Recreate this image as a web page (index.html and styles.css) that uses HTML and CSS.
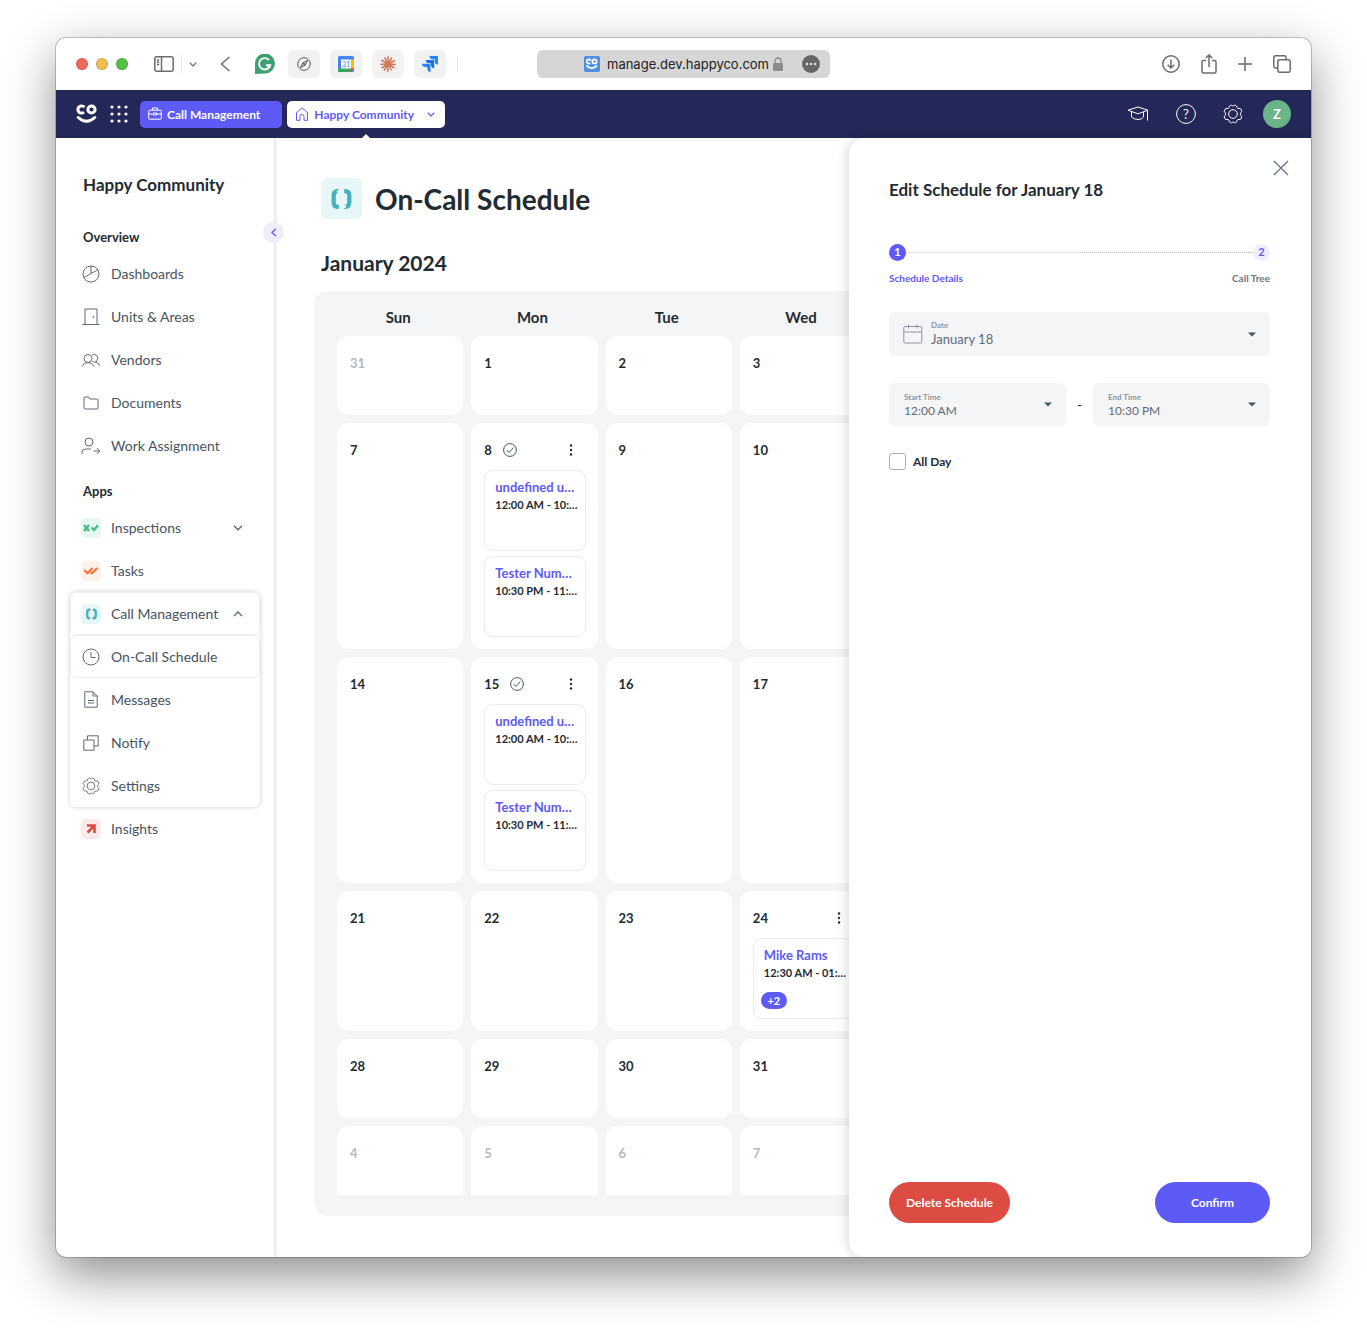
FILE: index.html
```html
<!DOCTYPE html>
<html lang="en">
<head>
  <meta charset="UTF-8">
  <meta name="viewport" content="width=device-width, initial-scale=1.0">
  <title>On-Call Schedule</title>
  <link rel="stylesheet" href="styles.css">
</head>
<body>
  <!-- shared icons -->
  <svg class="sprite" aria-hidden="true">
    <symbol id="i-gear" viewBox="0 0 20 20">
      <path d="M7.6 1.3 C8.3 0.6 8.9 1.9 10 1.9 S11.700 0.600 12.400 1.300 L13.600 2 C14.100 3 13.700 3.800 14.500 4.300 S16.700 4.100 17.500 4.700 L18.800 7 C18.900 8 17.300 8.700 17.300 10 S18.900 12 18.800 13 L17.500 15.300 C16.700 15.900 15.300 15.200 14.500 15.700 S14.100 17 13.600 18 L12.400 18.700 C11.700 19.400 11.100 18.100 10 18.100 S8.300 19.400 7.600 18.700 L6.400 18 C5.900 17 6.300 16.200 5.500 15.700 S3.300 15.900 2.500 15.300 L1.200 13 C1.100 12 2.700 11.300 2.700 10 S1.100 8 1.200 7 L2.500 4.700 C3.300 4.100 4.700 4.800 5.500 4.300 S5.900 3 6.400 2 Z"/>
      <circle cx="10" cy="10" r="4.300"/>
    </symbol>
    <symbol id="i-call" viewBox="0 0 24 24">
      <path d="M9 3.500 H8 Q3.500 3.500 3.500 8 V16 Q3.500 20.500 8 20.500 H9" fill="none" stroke="#46b1bb" stroke-width="4.600"/>
      <path d="M15 3.500 H16 Q20.500 3.500 20.500 8 V16 Q20.500 20.500 16 20.500 H15" fill="none" stroke="#46b1bb" stroke-width="4.600"/>
      <circle cx="8.500" cy="3.800" r="1.700" fill="#e7f6f7"/>
      <circle cx="15.500" cy="20.200" r="1.700" fill="#e7f6f7"/>
    </symbol>
    <symbol id="i-check" viewBox="0 0 14 14">
      <circle cx="7" cy="7" r="6.400"/>
      <path d="M3.800 7.200 L6.200 9.400 L10.300 4.700"/>
    </symbol>
    <symbol id="i-more" viewBox="0 0 4 12">
      <circle cx="2" cy="1.500" r="1.200"/><circle cx="2" cy="6" r="1.200"/><circle cx="2" cy="10.500" r="1.200"/>
    </symbol>
    <symbol id="i-down" viewBox="0 0 10 6"><path d="M1 .8 L5 4.800 L9 .8"/></symbol>
    <symbol id="i-up" viewBox="0 0 10 6"><path d="M1 5 L5 1 L9 5"/></symbol>
    <symbol id="i-caret" viewBox="0 0 8 5"><path d="M0 .5 H8 L4 4.500 Z"/></symbol>
    <symbol id="i-logo" viewBox="0 0 22 20">
      <circle cx="5.500" cy="5.500" r="3.600" fill="none" stroke="#fff" stroke-width="3" stroke-dasharray="16.800 6" transform="rotate(48 5.500 5.500)"/>
      <circle cx="15.500" cy="5.500" r="3.600" fill="none" stroke="#fff" stroke-width="3"/>
      <path d="M2.200 13.500 Q10.500 21 18.800 13.500" fill="none" stroke="#fff" stroke-width="3" stroke-linecap="round"/>
    </symbol>
  </svg>

  <div class="window">
    <header class="toolbar">
      <div class="toolbar-left">
        <div class="lights">
          <span class="light red"></span>
          <span class="light yellow"></span>
          <span class="light green"></span>
        </div>
        <button class="tool sidebar-tool" aria-label="Sidebar">
          <svg width="20" height="16" viewBox="0 0 20 16"><rect x=".8" y=".8" width="18.400" height="14.400" rx="2"/><path d="M7.500 1 V15 M2.800 4 H5.200 M2.800 6.300 H5.200 M2.800 8.600 H5.200"/></svg>
        </button>
        <button class="tool tabs-tool" aria-label="Tab groups"><svg width="8" height="5"><use href="#i-down"/></svg></button>
        <button class="tool back-tool" aria-label="Back">
          <svg width="11" height="16" viewBox="0 0 11 16"><path d="M9.500 1 L1.500 8 L9.500 15"/></svg>
        </button>
        <button class="tool" aria-label="Grammarly">
          <svg width="20" height="20" viewBox="0 0 20 20"><path d="M0 20 V10 A10 10 0 1 1 10 19.500 Z" fill="#3d9f74" stroke="none"/><path d="M14 6 A5.700 5.700 0 1 0 15.300 11.200 H11 M13.400 11.200 V14.500" stroke="#fff" stroke-width="1.900"/></svg>
        </button>
        <div class="extensions">
          <button class="ext" aria-label="Compass">
            <svg width="14" height="14" viewBox="0 0 14 14"><circle cx="7" cy="7" r="6.300" fill="none" stroke="#555"/><path d="M10.500 3.500 L8.200 8.200 L3.500 10.500 L5.800 5.800 Z" fill="none" stroke="#555"/><circle cx="7" cy="7" r="1" fill="#555"/></svg>
          </button>
          <button class="ext" aria-label="Calendar">
            <svg width="16" height="16" viewBox="0 0 16 16"><rect width="16" height="16" rx="1.500" fill="#4285f4"/><path d="M12.500 3.500 H16 V12.500 H12.500 Z" fill="#fbbc04"/><path d="M0 12.500 H12.500 V16 H1.500 Q0 16 0 14.500 Z" fill="#34a853"/><path d="M12.500 12.500 H16 L12.500 16 Z" fill="#ea4335"/><rect x="3" y="3.500" width="10" height="9" fill="#fff"/><text x="8" y="10.700" text-anchor="middle" font-size="7" fill="#4285f4">31</text></svg>
          </button>
          <button class="ext" aria-label="Claude">
            <svg width="16" height="16" viewBox="0 0 16 16"><path d="M8 8 V.3 M8 8 L12 1.500 M8 8 L15 4.500 M8 8 L15.700 8.500 M8 8 L14.500 12 M8 8 L11.500 14.500 M8 8 L7.800 15.700 M8 8 L4 14.500 M8 8 L1.500 12 M8 8 L.3 8.300 M8 8 L1.200 4 M8 8 L4.500 1.300" stroke="#d0785a" stroke-width="1.500"/></svg>
          </button>
          <button class="ext" aria-label="Jira">
            <svg width="16" height="16" viewBox="0 0 16 16"><path d="M7.500 0 H16 V8.500 Q12.800 8.500 12.800 5 V3.300 H11 Q7.500 3.300 7.500 0 Z" fill="#2684ff"/><path d="M3.800 3.900 H12.200 V12.200 Q9 12.200 9 8.800 V7.200 H7.300 Q3.800 7.200 3.800 3.900 Z" fill="#1d6fe8"/><path d="M0 7.700 H8.500 V16 Q5.300 16 5.300 12.600 V11 H3.500 Q0 11 0 7.700 Z" fill="#2684ff"/></svg>
          </button>
        </div>
        <span class="divider"></span>
      </div>

      <div class="address">
        <svg width="16" height="16" viewBox="-3 -3 28 28"><rect x="-3" y="-3" width="28" height="28" rx="3" fill="#4f8fe3"/><use href="#i-logo" width="22" height="20" y="1"/></svg>
        <input type="text" class="url" aria-label="Address" value="manage.dev.happyco.com">
        <svg class="lock" width="10" height="14" viewBox="0 0 10 14"><rect y="6" width="10" height="8" rx="1.300" fill="#8b8b8b"/><path d="M2 6.500 V4 A3 3 0 0 1 8 4 V6.500" fill="none" stroke="#8b8b8b" stroke-width="1.300"/></svg>
        <button class="page-menu" aria-label="Page menu">
          <svg width="18" height="18" viewBox="0 0 18 18"><circle cx="9" cy="9" r="9" fill="#666"/><circle cx="5" cy="9" r="1.300" fill="#ddd"/><circle cx="9" cy="9" r="1.300" fill="#ddd"/><circle cx="13" cy="9" r="1.300" fill="#ddd"/></svg>
        </button>
      </div>

      <div class="toolbar-right">
        <button class="tool" aria-label="Downloads"><svg width="18" height="18" viewBox="0 0 18 18"><circle cx="9" cy="9" r="8.200"/><path d="M9 4.500 V13 M5.700 9.800 L9 13 L12.300 9.800"/></svg></button>
        <button class="tool" aria-label="Share"><svg width="16" height="20" viewBox="0 0 16 20"><path d="M5 6.500 H2.500 Q1 6.500 1 8 V17.500 Q1 19 2.500 19 H13.500 Q15 19 15 17.500 V8 Q15 6.500 13.500 6.500 H11 M8 13 V1 M4.800 4 L8 .9 L11.200 4"/></svg></button>
        <button class="tool" aria-label="New tab"><svg width="14" height="14" viewBox="0 0 14 14"><path d="M7 0 V14 M0 7 H14"/></svg></button>
        <button class="tool" aria-label="Tab overview"><svg width="18" height="18" viewBox="0 0 18 18"><path d="M4.500 13 H2.500 Q.8 13 .8 11.300 V2.500 Q.8 .8 2.500 .8 H11.300 Q13 .8 13 2.500 V4.500"/><rect x="4.800" y="4.800" width="12.400" height="12.400" rx="1.700"/></svg></button>
      </div>
    </header>

    <nav class="navbar">
      <a href="#" class="logo" aria-label="HappyCo"><svg width="22" height="20"><use href="#i-logo"/></svg></a>
      <button class="apps-button" aria-label="Apps">
        <svg width="18" height="18" viewBox="0 0 18 18" fill="#fff"><circle cx="2" cy="2" r="1.600"/><circle cx="9" cy="2" r="1.600"/><circle cx="16" cy="2" r="1.600"/><circle cx="2" cy="9" r="1.600"/><circle cx="9" cy="9" r="1.600"/><circle cx="16" cy="9" r="1.600"/><circle cx="2" cy="16" r="1.600"/><circle cx="9" cy="16" r="1.600"/><circle cx="16" cy="16" r="1.600"/></svg>
      </button>
      <button class="nav-pill primary">
        <svg width="14" height="14" viewBox="0 0 14 14"><rect x=".7" y="3.200" width="12.600" height="9" rx="1"/><path d="M4.500 3 V1 H9.500 V3 M.7 7 H5.500 M8.500 7 H13.300 M5.500 6 H8.500 V8 H5.500 Z"/></svg>
        Call Management
      </button>
      <button class="nav-pill community">
        <svg width="14" height="14" viewBox="0 0 14 14"><path d="M.7 6.500 L7 .8 L13.300 6.500 M1.500 6 V13.300 H5 V9.500 Q5 7.500 7 7.500 T9 9.500 V13.300 H12.500 V6"/></svg>
        Happy Community
        <svg class="chevron" width="8" height="5"><use href="#i-down"/></svg>
      </button>
      <div class="nav-right">
        <button class="nav-icon" aria-label="Learning"><svg width="22" height="16" viewBox="0 0 22 16"><path d="M11 1 L21 4.200 L11 7.800 L1 4.200 Z M4.500 6 V11 Q7 13.500 11 13.500 T16.500 11 V6 M20.500 4.500 V14.500"/></svg></button>
        <button class="nav-icon" aria-label="Help"><svg width="20" height="20" viewBox="0 0 20 20"><circle cx="10" cy="10" r="9.400"/><text x="10" y="14.500" text-anchor="middle" font-size="13" fill="#fff" stroke="none">?</text></svg></button>
        <button class="nav-icon" aria-label="Settings"><svg width="20" height="20"><use href="#i-gear"/></svg></button>
        <button class="avatar">Z</button>
      </div>
    </nav>

    <div class="content">
      <aside class="sidebar">
        <h2>Happy Community</h2>
        <button class="collapse" aria-label="Collapse sidebar"><svg width="6" height="9" viewBox="0 0 6 9"><path d="M5 .8 L1 4.500 L5 8.200"/></svg></button>

        <h3>Overview</h3>
        <a href="#" class="item"><span class="icon"><svg width="18" height="18" viewBox="0 0 18 18"><circle cx="9" cy="9" r="8"/><path d="M9 1 V8.500 L2 12.500 M9 8.500 L15.800 5"/></svg></span>Dashboards</a>
        <a href="#" class="item"><span class="icon"><svg width="18" height="18" viewBox="0 0 18 18"><path d="M3 16.500 V1 H15 V16.500 M.5 16.500 H17.500"/><circle cx="11.500" cy="9" r=".6"/></svg></span>Units &amp; Areas</a>
        <a href="#" class="item"><span class="icon"><svg width="20" height="16" viewBox="0 0 20 16"><circle cx="7" cy="6.500" r="4"/><path d="M1 14.500 Q2.500 10.500 7 10.500 T13 14.500 M11 3 Q13.500 1.500 15.800 3.500 T15.500 9.500 Q13.500 10.700 11.500 9.500 M14.500 10.300 Q18 10.800 19 14"/></svg></span>Vendors</a>
        <a href="#" class="item"><span class="icon"><svg width="16" height="14" viewBox="0 0 16 14"><path d="M1 2 Q1 1 2 1 H5.500 L7 3 H14 Q15 3 15 4 V12 Q15 13 14 13 H2 Q1 13 1 12 Z"/></svg></span>Documents</a>
        <a href="#" class="item"><span class="icon"><svg width="20" height="18" viewBox="0 0 20 18"><circle cx="8" cy="5" r="4"/><path d="M1 17 V15 Q1 12 4.500 12 H10 M12.500 14 H18.500 M15.800 11 L18.800 14 L15.800 17"/></svg></span>Work Assignment</a>

        <h3 class="apps-heading">Apps</h3>
        <a href="#" class="item">
          <span class="icon tile green-tile"><svg width="16" height="8" viewBox="0 0 16 8"><path d="M1 1 L6 7 M6 1 L1 7 M8.500 3.500 L11 6 L15 1.300" stroke="#45bd8b" stroke-width="2.300"/></svg></span>Inspections
          <svg class="chevron" width="10" height="6"><use href="#i-down"/></svg>
        </a>
        <a href="#" class="item"><span class="icon tile orange-tile"><svg width="16" height="8" viewBox="0 0 16 8"><path d="M1.200 3 L4.300 6.200 L9.500 1 M7 4.500 L8.800 6.200 L14.500 1" stroke="#f3743c" stroke-width="2.200"/></svg></span>Tasks</a>

        <div class="submenu">
          <a href="#" class="item boxed">
            <span class="icon tile teal-tile"><svg width="13" height="12"><use href="#i-call"/></svg></span>Call Management
            <svg class="chevron" width="10" height="6"><use href="#i-up"/></svg>
          </a>
          <a href="#" class="item boxed"><span class="icon"><svg width="18" height="18" viewBox="0 0 18 18"><circle cx="9" cy="9" r="8"/><path d="M9 4 V9.500 H13.500"/></svg></span>On-Call Schedule</a>
          <a href="#" class="item"><span class="icon"><svg width="14" height="17" viewBox="0 0 14 17"><path d="M.8 .8 H9 L13.200 5 V16.200 H.8 Z M9 .8 V5 H13.200 M4 9.500 H10 M4 12 H10"/></svg></span>Messages</a>
          <a href="#" class="item"><span class="icon"><svg width="16" height="16" viewBox="0 0 16 16"><path d="M.8 5 H11 V15.200 H.8 Z M4.500 5 V.8 H15.200 V11 H11"/></svg></span>Notify</a>
          <a href="#" class="item"><span class="icon"><svg width="18" height="18"><use href="#i-gear"/></svg></span>Settings</a>
        </div>

        <a href="#" class="item"><span class="icon tile red-tile"><svg width="10" height="10" viewBox="0 0 10 10"><path d="M1 1.500 H8.500 V9 M8 2 L1.500 8.500" stroke="#dd4c42" stroke-width="2.600"/></svg></span>Insights</a>
      </aside>

      <main class="main">
        <div class="page-title">
          <span class="page-icon"><svg width="25" height="22"><use href="#i-call"/></svg></span>
          <h1>On-Call Schedule</h1>
        </div>
        <h2 class="month">January 2024</h2>

        <div class="calendar">
          <div class="weekdays">
            <span>Sun</span><span>Mon</span><span>Tue</span><span>Wed</span><span>Thu</span><span>Fri</span><span>Sat</span>
          </div>
          <div class="days">
            <div class="day muted">31</div>
            <div class="day">1</div>
            <div class="day">2</div>
            <div class="day">3</div>
            <div class="day">4</div>
            <div class="day">5</div>
            <div class="day">6</div>

            <div class="day">7</div>
            <div class="day">
              <div class="day-head">8 <svg class="done" width="14" height="14"><use href="#i-check"/></svg><button class="more" aria-label="More"><svg width="4" height="12"><use href="#i-more"/></svg></button></div>
              <div class="shift"><a href="#">undefined undefined</a><p>12:00 AM - 10:30 PM</p></div>
              <div class="shift"><a href="#">Tester Number</a><p>10:30 PM - 11:59 PM</p></div>
            </div>
            <div class="day">9</div>
            <div class="day">10</div>
            <div class="day">11</div>
            <div class="day">12</div>
            <div class="day">13</div>

            <div class="day">14</div>
            <div class="day">
              <div class="day-head">15 <svg class="done" width="14" height="14"><use href="#i-check"/></svg><button class="more" aria-label="More"><svg width="4" height="12"><use href="#i-more"/></svg></button></div>
              <div class="shift"><a href="#">undefined undefined</a><p>12:00 AM - 10:30 PM</p></div>
              <div class="shift"><a href="#">Tester Number</a><p>10:30 PM - 11:59 PM</p></div>
            </div>
            <div class="day">16</div>
            <div class="day">17</div>
            <div class="day">18</div>
            <div class="day">19</div>
            <div class="day">20</div>

            <div class="day">21</div>
            <div class="day">22</div>
            <div class="day">23</div>
            <div class="day">
              <div class="day-head">24 <button class="more" aria-label="More"><svg width="4" height="12"><use href="#i-more"/></svg></button></div>
              <div class="shift"><a href="#">Mike Rams</a><p>12:30 AM - 01:30 AM</p><span class="count">+2</span></div>
            </div>
            <div class="day">25</div>
            <div class="day">26</div>
            <div class="day">27</div>

            <div class="day">28</div>
            <div class="day">29</div>
            <div class="day">30</div>
            <div class="day">31</div>
            <div class="day muted">1</div>
            <div class="day muted">2</div>
            <div class="day muted">3</div>

            <div class="day muted last">4</div>
            <div class="day muted last">5</div>
            <div class="day muted last">6</div>
            <div class="day muted last">7</div>
            <div class="day muted last">8</div>
            <div class="day muted last">9</div>
            <div class="day muted last">10</div>
          </div>
        </div>
      </main>

      <form class="drawer">
        <button type="button" class="close" aria-label="Close"><svg width="16" height="16" viewBox="0 0 16 16"><path d="M1 1 L15 15 M15 1 L1 15"/></svg></button>
        <h2>Edit Schedule for January 18</h2>

        <div class="stepper">
          <span class="step active">1</span>
          <span class="line"></span>
          <span class="line dotted"></span>
          <span class="step">2</span>
        </div>
        <div class="step-labels">
          <span class="current">Schedule Details</span>
          <span>Call Tree</span>
        </div>

        <div class="field date-field">
          <svg class="field-icon" width="20" height="20" viewBox="0 0 20 20"><rect x=".8" y="2.500" width="18" height="16.500" rx="1.500"/><path d="M1 8 H19 M5.500 .5 V4.500 M14 .5 V4.500"/></svg>
          <label for="date">Date</label>
          <select id="date"><option>January 18</option></select>
          <svg class="caret" width="8" height="5"><use href="#i-caret"/></svg>
        </div>

        <div class="times">
          <div class="field">
            <label for="start">Start Time</label>
            <select id="start"><option>12:00 AM</option></select>
            <svg class="caret" width="8" height="5"><use href="#i-caret"/></svg>
          </div>
          <span class="dash">-</span>
          <div class="field">
            <label for="end">End Time</label>
            <select id="end"><option>10:30 PM</option></select>
            <svg class="caret" width="8" height="5"><use href="#i-caret"/></svg>
          </div>
        </div>

        <div class="all-day">
          <input type="checkbox" id="allday">
          <label for="allday">All Day</label>
        </div>

        <div class="actions">
          <button type="button" class="action delete">Delete Schedule</button>
          <button type="submit" class="action confirm">Confirm</button>
        </div>
      </form>
    </div>
  </div>
</body>
</html>
```
FILE: styles.css
```css
* {
  margin: 0;
  padding: 0;
  box-sizing: border-box;
}

body {
  min-height: 100vh;
  padding: 38px 56px 74px;
  background-color: #fff;
  color: #232b32;
  font-family: Lato, "Open Sans", sans-serif;
  font-size: 14px;
}

button,
input,
select {
  font: inherit;
  color: inherit;
}

button {
  display: flex;
  align-items: center;
  justify-content: center;
  border: none;
  background: none;
  cursor: pointer;
}

a {
  color: inherit;
  text-decoration: none;
}

svg {
  flex: none;
}

.sprite {
  position: absolute;
  width: 0;
  height: 0;
}

.window {
  display: flex;
  flex-direction: column;
  min-height: calc(100vh - 112px);
  border-radius: 10px;
  background-color: #fff;
  box-shadow: 0 0 0 1px rgba(0, 0, 0, 0.2), 0 18px 50px rgba(0, 0, 0, 0.45);
  overflow: hidden;
}

/* Browser toolbar */
.toolbar {
  display: grid;
  grid-template-columns: 1fr auto 1fr;
  align-items: center;
  height: 52px;
  padding: 0 20px;
}

.toolbar-left,
.toolbar-right {
  display: flex;
  align-items: center;
}

.toolbar-right {
  justify-content: flex-end;
  gap: 21px;
}

.lights {
  display: flex;
  gap: 8px;
  margin-right: 26px;
}

.light {
  width: 12px;
  height: 12px;
  border-radius: 50%;
  border: 1px solid rgba(0, 0, 0, 0.15);
}

.red {
  background-color: #ee6a5f;
}

.yellow {
  background-color: #f5bd4f;
}

.green {
  background-color: #55c146;
}

.tool svg {
  fill: none;
  stroke: #6b6b6b;
  stroke-width: 1.5;
}

.tabs-tool {
  height: 18px;
  margin-left: 7px;
  padding-left: 7px;
  border-left: 1px solid #e8e8e8;
}

.back-tool {
  margin: 0 24px 0 23px;
}

.extensions {
  display: flex;
  gap: 10px;
  margin-left: 13px;
}

.ext {
  width: 32px;
  height: 28px;
  border-radius: 6px;
  background-color: #f2f2f2;
}

.divider {
  width: 1px;
  height: 16px;
  margin-left: 11px;
  background-color: #e8e8e8;
}

.address {
  display: flex;
  align-items: center;
  width: 293px;
  height: 28px;
  padding: 0 10px 0 47px;
  border-radius: 6px;
  background-color: #d6d6d6;
}

.url {
  flex: 1;
  min-width: 0;
  margin-left: 7px;
  border: none;
  outline: none;
  background: none;
  color: #222;
  font-family: Inter, sans-serif;
  font-size: 13px;
}

.lock {
  margin: 0 19px 0 4px;
}

/* App navigation */
.navbar {
  display: flex;
  align-items: center;
  height: 48px;
  padding: 0 20px;
  background-color: #232858;
}

.logo {
  display: flex;
}

.apps-button {
  margin: 0 12px;
}

.nav-pill {
  gap: 5px;
  height: 27px;
  padding: 0 8px;
  border-radius: 5px;
  font-size: 12px;
  font-weight: bold;
}

.nav-pill svg {
  fill: none;
  stroke: currentColor;
}

.primary {
  padding-right: 22px;
  background-color: #5e5af6;
  color: #fff;
}

.community {
  position: relative;
  margin-left: 5px;
  background-color: #fff;
  color: #5e5af6;
}

.community .chevron {
  margin: 0 2px 0 8px;
  stroke-width: 1.5;
}

.community::after {
  content: "";
  position: absolute;
  bottom: -11px;
  left: 50%;
  border: 5px solid transparent;
  border-top: none;
  border-bottom-color: #fff;
  transform: translateX(-50%);
}

.nav-right {
  display: flex;
  align-items: center;
  gap: 27px;
  margin-left: auto;
}

.nav-icon svg {
  fill: none;
  stroke: #fff;
}

.avatar {
  width: 28px;
  height: 28px;
  margin-left: -7px;
  border-radius: 50%;
  background-color: #69b587;
  color: #fff;
  font-size: 13px;
  font-weight: bold;
}

.content {
  position: relative;
  display: flex;
  flex: 1;
}

/* Sidebar */
.sidebar {
  position: relative;
  flex: none;
  width: 218px;
  padding: 35px 14px 0;
  box-shadow: 1px 0 4px rgba(0, 0, 0, 0.16);
}

.sidebar h2 {
  margin: 0 13px 30px;
  font-size: 17px;
  line-height: 24px;
}

.sidebar h3 {
  margin: 0 13px 5px;
  font-size: 13px;
  line-height: 20px;
}

.sidebar .apps-heading {
  margin-top: 14px;
}

.collapse {
  position: absolute;
  top: 84px;
  right: -10px;
  width: 21px;
  height: 21px;
  border-radius: 50%;
  background-color: #efeefe;
}

.collapse svg {
  fill: none;
  stroke: #5e5af6;
  stroke-width: 1.3;
}

.item {
  display: flex;
  align-items: center;
  height: 43px;
  padding: 0 17px 0 11px;
  color: #475462;
}

.item svg {
  fill: none;
  stroke: #5d6b79;
}

.item .chevron {
  margin-left: auto;
  stroke-width: 1.4;
}

.icon {
  display: flex;
  align-items: center;
  justify-content: center;
  width: 20px;
  height: 20px;
  margin-right: 10px;
}

.tile {
  border-radius: 5px;
}

.green-tile {
  background-color: #e6f7f0;
}

.orange-tile {
  background-color: #fef0ea;
}

.teal-tile {
  background-color: #e7f6f7;
}

.red-tile {
  background-color: #fbeae9;
}

.submenu {
  border-radius: 6px;
  box-shadow: 0 0 5px rgba(0, 0, 0, 0.2);
}

.boxed {
  border-radius: 6px;
  box-shadow: inset 0 0 0 1px #eceef0;
}

/* Calendar page */
.main {
  flex: 1;
  min-width: 0;
  padding: 40px 19px 41px 40px;
}

.page-title {
  display: flex;
  align-items: center;
  gap: 13px;
  padding-left: 7px;
}

.page-icon {
  display: flex;
  align-items: center;
  justify-content: center;
  width: 41px;
  height: 41px;
  border-radius: 6px;
  background-color: #e7f6f7;
}

h1 {
  font-size: 28px;
  line-height: 36px;
}

.month {
  margin: 31px 0 15px;
  padding-left: 7px;
  font-size: 21px;
  line-height: 26px;
}

.calendar {
  padding: 0 23px 21px;
  border-radius: 14px;
  background-color: #f4f5f7;
}

.weekdays,
.days {
  display: grid;
  grid-template-columns: repeat(7, minmax(0, 1fr));
  gap: 8px;
}

.weekdays {
  padding: 16px 0 9px;
  font-size: 15px;
  font-weight: bold;
  line-height: 20px;
  text-align: center;
  text-indent: -4px;
}

.day {
  min-height: 79px;
  padding: 17px 12px 12px 13px;
  border-radius: 12px;
  background-color: #fff;
  font-size: 13px;
  font-weight: bold;
  line-height: 20px;
}

.day.muted {
  color: #b5b9bc;
}

.day.last {
  min-height: 69px;
  border-radius: 12px 12px 0 0;
}

.day-head {
  display: flex;
  align-items: center;
  height: 20px;
  margin-bottom: 10px;
}

.done {
  margin-left: 11px;
  fill: none;
  stroke: #475462;
}

.more {
  width: 20px;
  height: 20px;
  margin-left: auto;
  margin-right: 5px;
}

.more svg {
  fill: #232b32;
}

.shift {
  height: 81px;
  padding: 7px 6px 0 10px;
  border: 1px solid #e9ebed;
  border-radius: 9px;
}

.shift + .shift {
  margin-top: 5px;
}

.shift a,
.shift p {
  display: block;
  overflow: hidden;
  line-height: 18px;
  text-overflow: ellipsis;
  white-space: nowrap;
}

.shift a {
  color: #5e5af6;
}

.shift p {
  font-size: 11px;
}

.count {
  display: block;
  width: 26px;
  margin: 10px 0 0 -3px;
  border-radius: 9px;
  background-color: #5e5af6;
  color: #fff;
  font-size: 11px;
  line-height: 17px;
  text-align: center;
}

/* Edit panel, slides over the calendar */
.drawer {
  position: absolute;
  top: 0;
  right: 0;
  bottom: 0;
  display: flex;
  flex-direction: column;
  width: 462px;
  padding: 40px 41px 34px 40px;
  border-radius: 16px 0 0 16px;
  background-color: #fff;
  box-shadow: -2px 0 12px rgba(0, 0, 0, 0.14);
}

.drawer h2 {
  font-size: 17px;
  line-height: 24px;
}

.close {
  position: absolute;
  top: 22px;
  right: 22px;
}

.close svg {
  fill: none;
  stroke: #6a7682;
  stroke-width: 1.4;
}

.stepper {
  display: flex;
  align-items: center;
  margin-top: 42px;
}

.step {
  width: 17px;
  height: 17px;
  border-radius: 50%;
  background-color: #efeefe;
  color: #5e5af6;
  font-size: 11px;
  font-weight: bold;
  line-height: 16px;
  text-align: center;
}

.step.active {
  background-color: #5e5af6;
  color: #fff;
}

.line {
  flex: 1;
  border-top: 1px solid #e3e5e8;
}

.line.dotted {
  border-top: 1px dotted #b5b9bc;
}

.step-labels {
  display: flex;
  justify-content: space-between;
  margin: 9px 0 26px;
  color: #6a7682;
  font-size: 10px;
  font-weight: bold;
  line-height: 16px;
}

.step-labels .current {
  color: #5e5af6;
}

/* Label, value and caret share one grid cell, the select fills it */
.field {
  display: grid;
  flex: 1;
  height: 43px;
  border-radius: 6px;
  background-color: #f4f5f7;
}

.field > * {
  grid-area: 1 / 1;
}

.field label {
  z-index: 1;
  align-self: start;
  justify-self: start;
  margin: 9px 0 0 15px;
  color: #8c959e;
  font-size: 8px;
  font-weight: bold;
  line-height: 10px;
  pointer-events: none;
}

.field select {
  appearance: none;
  align-self: end;
  width: 100%;
  height: 24px;
  padding: 0 32px 8px 15px;
  border: none;
  border-radius: 6px;
  background: none;
  color: #5d6b79;
  font-size: 12px;
}

.field .caret {
  align-self: center;
  justify-self: end;
  margin-right: 14px;
  fill: #475462;
  pointer-events: none;
}

.date-field {
  flex: none;
  height: 44px;
}

.date-field label {
  margin: 8px 0 0 42px;
}

.date-field select {
  height: 26px;
  padding: 0 32px 8px 42px;
  font-size: 13px;
}

.field-icon {
  align-self: center;
  margin-left: 14px;
  fill: none;
  stroke: #8c959e;
}

.times {
  display: flex;
  align-items: center;
  margin: 27px 0;
}

.dash {
  width: 27px;
  text-align: center;
}

.all-day {
  display: flex;
  align-items: center;
  gap: 7px;
  font-size: 12px;
  font-weight: bold;
}

.all-day input {
  appearance: none;
  width: 17px;
  height: 17px;
  border: 1px solid #a9b0b7;
  border-radius: 3px;
  background-color: #fff;
}

.all-day input:checked {
  background-color: #5e5af6;
}

.actions {
  display: flex;
  justify-content: space-between;
  margin-top: auto;
}

.action {
  min-width: 115px;
  height: 41px;
  padding: 0 17px;
  border-radius: 21px;
  color: #fff;
  font-size: 12px;
  font-weight: bold;
}

.delete {
  background-color: #dd4c42;
}

.confirm {
  background-color: #5e5af6;
}
```
